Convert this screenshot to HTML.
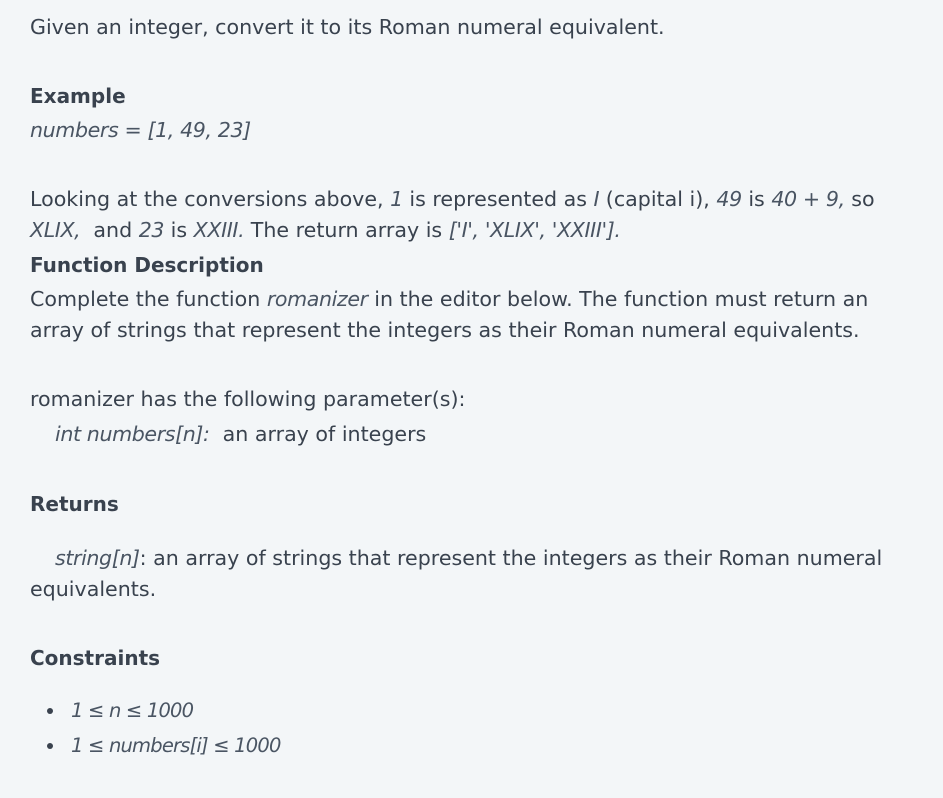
<!DOCTYPE html>
<html><head><meta charset="utf-8"><style>
html,body{margin:0;padding:0;background:#f3f6f8;width:943px;height:798px;overflow:hidden}
body{font-family:"DejaVu Sans","Liberation Sans",sans-serif;color:#39424e;font-size:20.6px;position:relative}
.l{position:absolute;left:30px;line-height:26px;white-space:nowrap}
i{font-style:italic;color:#4a5563;letter-spacing:-0.4px}
.c i{letter-spacing:-0.8px;font-size:19.5px}
b{font-weight:bold;font-size:20px}
.dot{position:absolute;left:47px;width:6px;height:6px;border-radius:50%;background:#39424e}
</style></head><body>
<div class="l" style="top:14px">Given an integer, convert it to its Roman numeral equivalent.</div>
<div class="l" style="top:83px"><b>Example</b></div>
<div class="l" style="top:117px"><i>numbers = [1, 49, 23]</i></div>
<div class="l" style="top:186px">Looking at the conversions above, <i>1</i> is represented as <i>I</i> (capital i), <i>49</i> is <i>40 + 9,</i> so</div>
<div class="l" style="top:217px"><i>XLIX,</i>&nbsp; and <i>23</i> is <i>XXIII.</i> The return array is <i>['I', 'XLIX', 'XXIII'].</i></div>
<div class="l" style="top:252px"><b>Function Description</b></div>
<div class="l" style="top:286px">Complete the function <i>romanizer</i> in the editor below. The function must return an</div>
<div class="l" style="top:317px">array of strings that represent the integers as their Roman numeral equivalents.</div>
<div class="l" style="top:386px">romanizer has the following parameter(s):</div>
<div class="l" style="top:421px;left:55px"><i>int numbers[n]:</i>&nbsp; an array of integers</div>
<div class="l" style="top:491px"><b>Returns</b></div>
<div class="l" style="top:545px;left:55px"><i>string[n]</i>: an array of strings that represent the integers as their Roman numeral</div>
<div class="l" style="top:576px">equivalents.</div>
<div class="l" style="top:645px"><b>Constraints</b></div>
<div class="dot" style="top:708px"></div>
<div class="l c" style="top:697px;left:71px"><i>1 ≤ n ≤ 1000</i></div>
<div class="dot" style="top:743px"></div>
<div class="l c" style="top:732px;left:71px"><i>1 ≤ numbers[i] ≤ 1000</i></div>
</body></html>
